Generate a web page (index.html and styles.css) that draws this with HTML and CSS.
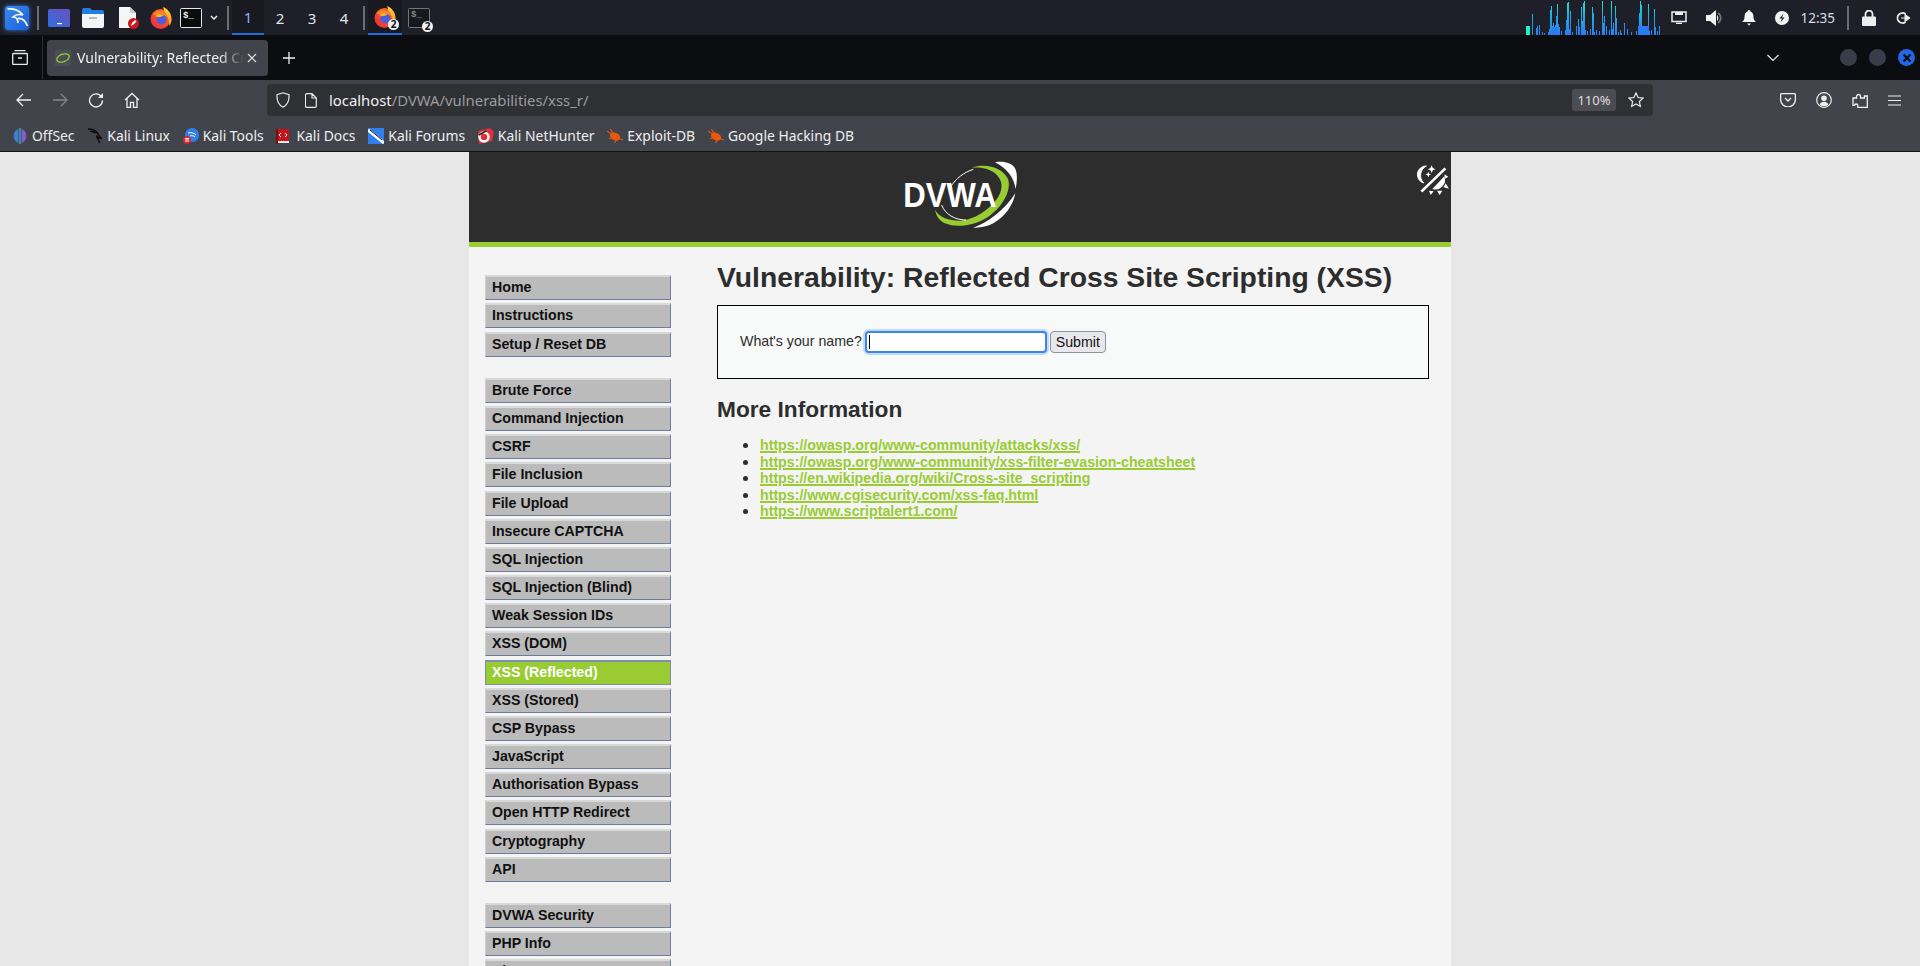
FILE: index.html
```html
<!DOCTYPE html>
<html>

<head>
    <title>Vulnerability: Reflected Cross Site Scripting (XSS)</title>
    <link rel="stylesheet" href="styles.css">
</head>

<body>
    <!-- shared icon shapes -->
    <svg class="icon-defs" width="0" height="0">
        <defs>
            <linearGradient id="foxBody" x1="0" y1="1" x2="1" y2="0">
                <stop offset="0" stop-color="#e8263c"/>
                <stop offset="1" stop-color="#ff7a1e"/>
            </linearGradient>
            <linearGradient id="foxFlame" x1="0" y1="0" x2="0" y2="1">
                <stop offset="0" stop-color="#ffd23c"/>
                <stop offset="1" stop-color="#ff9a1e"/>
            </linearGradient>
            <linearGradient id="desktopFill" x1="0" y1="1" x2="1" y2="0">
                <stop offset="0" stop-color="#2f6fe0"/>
                <stop offset="1" stop-color="#6a4fc0"/>
            </linearGradient>
            <g id="fox">
                <circle cx="10.500" cy="12" r="10" fill="url(#foxBody)"/>
                <path d="M13 0c5 2 8 6 8.500 11 .3 3-.5 6-2 8-.5-7-2-11-5-14 0-2-1-3-1.500-5z" fill="url(#foxFlame)"/>
                <path d="M3 8c2-4 6-5 10-3 2 1 3 3 3.500 5l-5-2z" fill="#ff8a1e"/>
                <circle cx="11.500" cy="12.500" r="5" fill="#4a5fe0"/>
                <path d="M5 9c3-2 6-2 9-1-2 1-3 2-4 2-2 0-3 0-5-1z" fill="#ffb02c"/>
            </g>
            <g id="bug">
                <ellipse cx="7.500" cy="7" rx="5" ry="3.500" transform="rotate(25 7.500 7)" fill="#e8590c"/>
                <path d="M0 2l5 3M3 0l3 4M15 10l-4-1M7 13l2-3M2 9l3-1" stroke="#e8590c"/>
            </g>
        </defs>
    </svg>

    <!-- desktop panel -->
    <div class="panel">
        <div class="panel-logo">
            <svg width="24" height="24" viewBox="0 0 24 24"><path d="M2.500 3C9 2 15 5 18 9M18 9C14 8 10 9 8 11 11 11 13 13 13 17M13 12.500C17 12 20 14 22.500 20" fill="none" stroke="#fff" stroke-width="1.700"/></svg>
        </div>
        <span class="panel-sep"></span>
        <div class="launcher launcher-desktop">
            <svg width="22" height="18" viewBox="0 0 22 18"><rect width="22" height="18" rx="1.500" fill="url(#desktopFill)"/><rect x="9" y="14" width="5" height="1.200" fill="#fff"/></svg>
        </div>
        <div class="launcher launcher-files">
            <svg width="22" height="20" viewBox="0 0 22 20"><path d="M0 2q0-2 2-2h6l2 2h10q2 0 2 2v3h-22z" fill="#1f7fe0"/><path d="M0 6h22v12q0 2-2 2h-18q-2 0-2-2z" fill="#f4f5f6"/><rect x="7" y="9" width="8" height="2" fill="#bbb"/></svg>
        </div>
        <div class="launcher launcher-doc">
            <svg width="22" height="22" viewBox="0 0 22 22"><path d="M1 0h11l6 6v15h-17z" fill="#f6f6f6"/><path d="M12 0l6 6h-6z" fill="#ccc"/><circle cx="15.500" cy="16.500" r="5.500" fill="#c9171e"/><path d="M13 19l1-3 3-3 1.500 1.500-3 3z" fill="#fff"/></svg>
        </div>
        <div class="launcher launcher-fox">
            <svg width="22" height="22" viewBox="0 0 22 22"><use href="#fox"/></svg>
        </div>
        <div class="launcher launcher-term">
            <svg width="22" height="20" viewBox="0 0 22 20"><rect x=".5" y=".5" width="21" height="19" rx="1" fill="#0b0b0d" stroke="#e8e8e8"/><text x="3" y="10" class="term-text">$_</text></svg>
        </div>
        <svg class="panel-chevron" width="8" height="6" viewBox="0 0 8 6"><path d="M1 1l3 3 3-3" fill="none" stroke="#eee" stroke-width="1.500"/></svg>
        <span class="panel-sep sep-workspaces"></span>
        <div class="workspace workspace-active">1</div>
        <div class="workspace">2</div>
        <div class="workspace">3</div>
        <div class="workspace">4</div>
        <span class="panel-sep sep-tasks"></span>
        <div class="task task-active">
            <svg width="22" height="22" viewBox="0 0 22 22"><use href="#fox"/></svg>
            <span class="task-count">2</span>
        </div>
        <div class="task">
            <svg width="22" height="20" viewBox="0 0 22 20"><rect x=".5" y=".5" width="21" height="19" rx="1" fill="#17181f" stroke="#777"/><text x="3" y="9" class="term-text term-dim">$_</text></svg>
            <span class="task-count">2</span>
        </div>

        <svg class="cpu-graph" width="134" height="34" viewBox="0 0 134 34">
            <defs>
                <linearGradient id="cpuFill" gradientUnits="userSpaceOnUse" x1="0" y1="34" x2="0" y2="0">
                    <stop offset="0" stop-color="#2a7df0"/>
                    <stop offset=".5" stop-color="#1ea8e8"/>
                    <stop offset="1" stop-color="#12e6d8"/>
                </linearGradient>
            </defs>
            <rect y="25" width="4" height="9" fill="#1ff0c8"/>
            <path d="M6.500 34V13M10.500 34V27M11.500 34V25M13.500 34V24M16.500 34V31M18.500 34V32M22.500 34V31M23.500 34V28M24.500 34V9M25.500 34V5M26.500 34V25M27.500 34V22M29.500 34V24M30.500 34V15M31.500 34V3M32.500 34V23M33.500 34V26M35.500 34V30M39.500 34V29M40.500 34V19M41.500 34V2M42.500 34V1M43.500 34V28M44.500 34V10M46.500 34V31M50.500 34V25M52.500 34V18M53.500 34V26M55.500 34V6M56.500 34V20M57.500 34V2M58.500 34V0M59.500 34V29M61.500 34V30M64.500 34V28M66.500 34V6M67.500 34V12M68.500 34V31M70.500 34V29M73.500 34V30M76.500 34V0M77.500 34V22M78.500 34V15M80.500 34V25M83.500 34V29M85.500 34V0M86.500 34V28M87.500 34V22M89.500 34V5M90.500 34V17M92.500 34V31M94.500 34V29M95.500 34V32M98.500 34V22M101.500 34V28M105.500 34V31M110.500 34V30M113.500 34V12M114.500 34V0M115.500 34V4M116.500 34V26M118.500 34V25M120.500 34V28M122.500 34V3M123.500 34V30M125.500 34V29M128.500 34V8M129.500 34V26M131.500 34V30M133.500 34V25" stroke="url(#cpuFill)" fill="none"/>
            <rect x="42" y="30" width="2" height="4" fill="#2a7df0"/>
            <rect x="112" y="25" width="11" height="9" fill="#2a7df0"/>
            <rect x="26" y="26" width="6" height="8" fill="#2a7df0"/>
        </svg>
        <div class="tray">
            <svg width="16" height="13" viewBox="0 0 16 13"><path d="M1 1h14v9.500h-14zM5 12.500h6" fill="none" stroke="#eee" stroke-width="1.500"/><path d="M4 1h8v3h-8z" fill="#eee"/></svg>
            <svg class="tray-volume" width="18" height="16" viewBox="0 0 18 16"><path d="M0 5h4l6-5v16l-6-5h-4z" fill="#f2f2f2"/><path d="M12 3a6 6 0 0 1 0 10" fill="none" stroke="#777" stroke-width="1.600"/><path d="M11 5a4 4 0 0 1 0 6z" fill="#eee"/></svg>
            <svg width="16" height="16" viewBox="0 0 16 16"><path d="M8 0a1.500 1.500 0 0 1 1.500 1.500c2.500 1 3 3 3 6 0 2 1 3 2.500 4.500h-14c1.500-1.500 2.500-2.500 2.500-4.500 0-3 .5-5 3-6a1.500 1.500 0 0 1 1.500-1.500zM6 13.500h4l-2 2z" fill="#f5f5f5"/></svg>
            <svg width="14" height="14" viewBox="0 0 14 14"><circle cx="7" cy="7" r="7" fill="#f2f2f2"/><path d="M8.500 2.500l-4 5h2.500l-1.500 4 4-5h-2.500z" fill="#1e1f29"/></svg>
            <span class="clock">12:35</span>
            <span class="panel-sep sep-tray"></span>
            <svg width="14" height="16" viewBox="0 0 14 16"><path d="M3.500 7v-3a3.500 3.500 0 0 1 7 0v3" fill="none" stroke="#eee" stroke-width="1.800"/><rect y="6.500" width="14" height="9.500" rx="1" fill="#eee"/></svg>
            <svg class="tray-exit" width="15" height="14" viewBox="0 0 15 14"><path d="M9.500 3a5 5 0 1 0 0 8" fill="none" stroke="#eee" stroke-width="1.800"/><path d="M5 7h6M9 3.500l5 3.500-5 3.500z" fill="#eee" stroke="#eee"/></svg>
        </div>
    </div>

    <!-- browser tabs -->
    <div class="tabbar">
        <div class="tabs-view">
            <svg width="16" height="15" viewBox="0 0 16 15"><path d="M2.500 .7h11M1.300 3.500h13.400a.6.6 0 0 1 .6.6v9.700a.6.6 0 0 1-.6.6h-13.400a.6.6 0 0 1-.6-.6v-9.700a.6.6 0 0 1 .6-.6zM6 8h4" fill="none" stroke="#e8e8ea" stroke-width="1.300"/></svg>
        </div>
        <div class="tab">
            <span class="tab-favicon">
                <svg width="16" height="16" viewBox="0 0 16 16"><ellipse cx="8" cy="8" rx="6.500" ry="3.800" transform="rotate(-20 8 8)" fill="none" stroke="#9c3" stroke-width="1.300"/></svg>
            </span>
            <span class="tab-title">Vulnerability: Reflected Cross Site Scripting (XSS)</span>
            <svg width="10" height="10" viewBox="0 0 10 10"><path d="M1 1l8 8M9 1l-8 8" stroke="#e2e2e4" stroke-width="1.100"/></svg>
        </div>
        <svg class="tab-new" width="14" height="14" viewBox="0 0 14 14"><path d="M7 1v12M1 7h12" stroke="#f0f0f2" stroke-width="1.300"/></svg>
        <svg class="tab-list" width="14" height="8" viewBox="0 0 14 8"><path d="M1.500 1l5.500 5.500 5.500-5.500" fill="none" stroke="#e8e8ea" stroke-width="1.200"/></svg>
        <div class="window-buttons">
            <span class="window-button"></span>
            <span class="window-button"></span>
            <span class="window-button window-close">
                <svg width="10" height="10" viewBox="0 0 10 10"><path d="M1.500 1.500l7 7M8.500 1.500l-7 7" stroke="#0c0d10" stroke-width="2.200"/></svg>
            </span>
        </div>
    </div>

    <!-- navigation -->
    <div class="navbar">
        <div class="nav-buttons">
            <svg width="16" height="14" viewBox="0 0 16 14"><path d="M15 7h-13M7 1l-6 6 6 6" fill="none" stroke="#f0f0f2" stroke-width="1.300"/></svg>
            <svg width="16" height="14" viewBox="0 0 16 14"><path d="M1 7h13M9 1l6 6-6 6" fill="none" stroke="#85868b" stroke-width="1.300"/></svg>
            <svg width="16" height="16" viewBox="0 0 16 16"><path d="M13.500 5a6.500 6.500 0 1 0 1 3.500" fill="none" stroke="#f0f0f2" stroke-width="1.300"/><path d="M15 1v5h-5z" fill="#f0f0f2"/></svg>
            <svg width="16" height="16" viewBox="0 0 16 16"><path d="M1 8l7-6.500 7 6.500M3 6.500v8.800h3.500v-5h3v5h3.500v-8.800" fill="none" stroke="#f0f0f2" stroke-width="1.300"/></svg>
        </div>
        <div class="urlbar">
            <svg width="14" height="16" viewBox="0 0 14 16"><path d="M7 .8l6 2c.3 5.500-1 10-6 12.400-5-2.400-6.300-6.900-6-12.400z" fill="none" stroke="#ececee" stroke-width="1.200"/></svg>
            <svg width="12" height="15" viewBox="0 0 12 15"><path d="M1.700 .7h5.300l4.300 4.300v8a1.300 1.300 0 0 1-1.300 1.300h-8.300a1.300 1.300 0 0 1-1.300-1.300v-11a1.300 1.300 0 0 1 1.300-1.300zM7 .7v4.300h4.300" fill="none" stroke="#ececee" stroke-width="1.200"/></svg>
            <span class="url-text">localhost<span class="url-path">/DVWA/vulnerabilities/xss_r/</span></span>
            <span class="url-zoom">110%</span>
            <svg width="16" height="16" viewBox="0 0 16 16"><path d="M8 1l2.100 4.500 4.900.6-3.600 3.400.9 4.900-4.300-2.400-4.300 2.400.9-4.900-3.600-3.400 4.900-.6z" fill="none" stroke="#ececee" stroke-width="1.200"/></svg>
        </div>
        <div class="nav-actions">
            <svg width="16" height="14" viewBox="0 0 16 14"><path d="M1.500 .7h13a.9.900 0 0 1 .9.900v4.900a7.400 7.400 0 0 1-14.800 0v-4.900a.9.900 0 0 1 .9-.900zM5 5l3 3 3-3" fill="none" stroke="#f0f0f2" stroke-width="1.300"/></svg>
            <svg width="16" height="16" viewBox="0 0 16 16"><circle cx="8" cy="8" r="7.300" fill="none" stroke="#f0f0f2" stroke-width="1.200"/><circle cx="8" cy="6.300" r="2.800" fill="#f0f0f2"/><path d="M3.500 12.500c1-2 2.500-2.800 4.500-2.800s3.500.8 4.500 2.800c-2.500 2-6.500 2-9 0z" fill="#f0f0f2"/></svg>
            <svg width="16" height="16" viewBox="0 0 16 16"><path d="M1 6h3.500v-1.500a2 2 0 0 1 4 0v1.500h4v-2h2.800v11.300h-9.500v-2.300a1.800 1.800 0 0 0-3.200 0v.3h-1.600z" fill="none" stroke="#f0f0f2" stroke-width="1.300"/></svg>
            <svg width="13" height="11" viewBox="0 0 13 11"><path d="M0 1h13M0 5.500h13M0 10h13" stroke="#f0f0f2" stroke-width="1.200"/></svg>
        </div>
    </div>

    <!-- bookmarks -->
    <div class="bookmarks">
        <a class="bookmark">
            <svg width="16" height="16" viewBox="0 0 15 15"><path d="M6 1a7 7 0 0 0 0 13z" fill="#3f7fd8"/><path d="M9 1a7 7 0 0 1 0 13z" fill="#8a5ad0"/><rect x="7" y="0" width="1" height="15" fill="#27d0e0"/></svg>
            OffSec
        </a>
        <a class="bookmark">
            <svg width="16" height="16" viewBox="0 0 15 15"><path d="M1 1c4 0 7 1 9 4 1 2 2 4 4 5-2 0-4-1-5-3 0 3 2 4 3 7M3 3c2 0 4 1 5 2" fill="none" stroke="#0b0b0d" stroke-width="1.300"/></svg>
            Kali Linux
        </a>
        <a class="bookmark">
            <svg width="16" height="16" viewBox="0 0 16 16"><circle cx="9" cy="7" r="7" fill="#2f80e8"/><path d="M5 5c3-1 6 0 8 2M7 8c2-1 4 0 5 1" fill="none" stroke="#fff"/><circle cx="4" cy="12" r="4" fill="#d8262c"/><rect x="2" y="10" width="4" height="1" fill="#fff"/><rect x="2.500" y="10" width="1" height="4" fill="#fff"/><rect x="4.500" y="10" width="1" height="4" fill="#fff"/></svg>
            Kali Tools
        </a>
        <a class="bookmark">
            <svg width="16" height="16" viewBox="0 0 16 16"><path d="M1 1h12v12h-12z" fill="#c4161c"/><path d="M1 13h12v2h-12z" fill="#e8e8e8"/><path d="M0 1h2v15h-2z" fill="#7c0e12"/><path d="M5 5l-2 2 2 2M9 5l2 2-2 2" fill="none" stroke="#fff"/></svg>
            Kali Docs
        </a>
        <a class="bookmark">
            <svg width="16" height="16" viewBox="0 0 16 16"><rect width="16" height="16" fill="#2f80e8"/><path d="M0 2l16 13" stroke="#fff" stroke-width="3"/><path d="M2 2l12 10" stroke="#222"/></svg>
            Kali Forums
        </a>
        <a class="bookmark">
            <svg width="16" height="16" viewBox="0 0 16 16"><path d="M0 3l12-3 4 4-2 9-13 3z" fill="#e0303a"/><circle cx="6" cy="9" r="4.500" fill="none" stroke="#fff" stroke-width="2.500"/><path d="M1 7l7-4" stroke="#222" stroke-width="1.500"/></svg>
            Kali NetHunter
        </a>
        <a class="bookmark">
            <svg width="16" height="14" viewBox="0 0 15 13"><use href="#bug"/></svg>
            Exploit-DB
        </a>
        <a class="bookmark">
            <svg width="16" height="14" viewBox="0 0 15 13"><use href="#bug"/></svg>
            Google Hacking DB
        </a>
    </div>

    <!-- page -->
    <div class="viewport">
        <div class="page">
            <div class="page-header">
                <svg class="dvwa-logo" width="140" height="85" viewBox="0 0 420 255">
                    <path d="M245 38C290 22 340 40 354 72 364 100 345 150 295 185 255 212 200 220 165 205 148 197 138 182 135 165 150 188 175 197 210 197 250 195 300 165 325 125 340 100 338 75 315 55 298 40 270 36 245 38z" fill="#9c3"/>
                    <path d="M315 22C340 18 365 22 376 42 384 60 380 85 377 102 372 70 352 40 315 22zM376 115C370 150 345 185 310 205 292 215 270 219 250 218 290 205 345 165 376 115z" fill="#fff"/>
                    <path d="M250 43C222 52 198 70 182 95M155 150C165 178 195 195 228 195" fill="none" stroke="#fff" stroke-width="3"/>
                    <text x="40" y="155" textLength="280" lengthAdjust="spacingAndGlyphs" class="dvwa-text">DVWA</text>
                </svg>
                <svg class="theme-toggle" width="46" height="50" viewBox="0 0 138 150">
                    <path d="M64 33A26 26 0 0 0 56 84 32 32 0 0 1 64 33z" fill="#fff" stroke="#fff" stroke-width="3"/>
                    <path d="M80 31l3.500 8 8 3.500-8 3.500-3.500 8-3.500-8-8-3.500 8-3.500zM70 50l2.500 6 6 2.500-6 2.500-2.500 6-2.500-6-6-2.500 6-2.500z" fill="#fff"/>
                    <path d="M121 40L49 110" stroke="#fff" stroke-width="8"/>
                    <path d="M118 64A29 29 0 0 1 82 102z" fill="#fff"/>
                    <path d="M118 58l12 7-10 6zM122 85l10 16-16-4zM96 107h16l-8 13zM72 107l14 2-9 11z" fill="#fff"/>
                </svg>
            </div>
            <div class="page-body">
                <div class="main-menu">
                    <ul class="menu-group">
                        <li><a>Home</a></li>
                        <li><a>Instructions</a></li>
                        <li><a>Setup / Reset DB</a></li>
                    </ul>
                    <ul class="menu-group">
                        <li><a>Brute Force</a></li>
                        <li><a>Command Injection</a></li>
                        <li><a>CSRF</a></li>
                        <li><a>File Inclusion</a></li>
                        <li><a>File Upload</a></li>
                        <li><a>Insecure CAPTCHA</a></li>
                        <li><a>SQL Injection</a></li>
                        <li><a>SQL Injection (Blind)</a></li>
                        <li><a>Weak Session IDs</a></li>
                        <li><a>XSS (DOM)</a></li>
                        <li class="selected"><a>XSS (Reflected)</a></li>
                        <li><a>XSS (Stored)</a></li>
                        <li><a>CSP Bypass</a></li>
                        <li><a>JavaScript</a></li>
                        <li><a>Authorisation Bypass</a></li>
                        <li><a>Open HTTP Redirect</a></li>
                        <li><a>Cryptography</a></li>
                        <li><a>API</a></li>
                    </ul>
                    <ul class="menu-group">
                        <li><a>DVWA Security</a></li>
                        <li><a>PHP Info</a></li>
                        <li><a>About</a></li>
                    </ul>
                </div>
                <div class="main-body">
                    <h1>Vulnerability: Reflected Cross Site Scripting (XSS)</h1>
                    <div class="vulnerable-code">
                        <form class="name-form" onsubmit="return false;">
                            <label for="nameInput" class="name-label">What's your name?</label>
                            <input type="text" id="nameInput" class="name-input">
                            <button type="submit" class="submit-button">Submit</button>
                        </form>
                    </div>
                    <h2>More Information</h2>
                    <ul class="info-links">
                        <li><a href="#">https://owasp.org/www-community/attacks/xss/</a></li>
                        <li><a href="#">https://owasp.org/www-community/xss-filter-evasion-cheatsheet</a></li>
                        <li><a href="#">https://en.wikipedia.org/wiki/Cross-site_scripting</a></li>
                        <li><a href="#">https://www.cgisecurity.com/xss-faq.html</a></li>
                        <li><a href="#">https://www.scriptalert1.com/</a></li>
                    </ul>
                </div>
            </div>
        </div>
    </div>
</body>

</html>
```

FILE: styles.css
```css
html,
body {
    height: 100%;
    margin: 0;
}

body {
    display: flex;
    flex-direction: column;
    overflow: hidden;
    background-color: #e7e7e7;
    font-family: 'Noto Sans', sans-serif;
}

svg {
    display: block;
    flex-shrink: 0;
}

.icon-defs {
    position: absolute;
}

/* desktop panel */
.panel {
    display: flex;
    align-items: center;
    height: 35px;
    padding-left: 5px;
    background-color: #1e1f29;
    color: #eee;
}

.panel-logo {
    display: flex;
    align-items: center;
    justify-content: center;
    width: 24px;
    height: 24px;
    border-radius: 3px;
    background: linear-gradient(135deg, #3b8bf0, #1a5fd8);
    box-shadow: 0 0 4px #2f7fe8;
}

.panel-sep {
    width: 2px;
    height: 24px;
    margin-left: 8px;
    background-color: #6c6d74;
}

.launcher {
    display: flex;
    justify-content: center;
    width: 22px;
}

.launcher-desktop {
    margin-left: 9px;
}

.launcher-files {
    margin-left: 12px;
}

.launcher-doc {
    margin-left: 14px;
}

.launcher-fox {
    margin-left: 10px;
}

.launcher-term {
    margin-left: 8px;
}

.panel-chevron {
    margin-left: 8px;
}

.sep-workspaces {
    margin-left: 9px;
    margin-right: 3px;
}

.workspace {
    display: flex;
    align-items: center;
    justify-content: center;
    width: 32px;
    height: 35px;
    box-sizing: border-box;
    font-size: 15px;
    color: #dfe6f0;
}

.workspace-active {
    border-bottom: 2px solid #1d6ce0;
    background-color: #181921;
    color: #7fb4ff;
}

.sep-tasks {
    margin-left: 3px;
    margin-right: 3px;
}

.task {
    display: flex;
    align-items: center;
    justify-content: center;
    position: relative;
    width: 34px;
    height: 35px;
    box-sizing: border-box;
}

.task-active {
    border-bottom: 2px solid #1d6ce0;
    background-color: #181921;
}

.task-count {
    position: absolute;
    right: 3px;
    bottom: 3px;
    width: 11px;
    height: 11px;
    border-radius: 50%;
    background-color: #f2f2f2;
    color: #111;
    font-size: 10px;
    font-weight: 700;
    line-height: 11px;
    text-align: center;
}

.term-text {
    font-family: 'Liberation Mono', monospace;
    font-size: 9px;
    font-weight: 700;
    fill: #eee;
}

.term-dim {
    fill: #888;
}

.cpu-graph {
    margin-left: auto;
}

.tray {
    display: flex;
    align-items: center;
    margin-left: 11px;
    margin-right: 9px;
    gap: 18px;
}

.tray-volume {
    margin-left: 1px;
    margin-right: -1px;
}

.clock {
    margin-left: -7px;
    font-size: 13.500px;
    color: #d8dde6;
}

.sep-tray {
    margin-left: -6px;
    margin-right: -5px;
}

.tray-exit {
    margin-left: 2px;
}

/* tab strip */
.tabbar {
    display: flex;
    align-items: center;
    height: 45px;
    background-color: #0c0d10;
}

.tabs-view {
    display: flex;
    align-items: center;
    justify-content: center;
    width: 40px;
    height: 43px;
    padding-right: 2px;
    border-right: 1px solid #2c2d33;
}

.tab {
    display: flex;
    align-items: center;
    width: 221px;
    height: 36px;
    margin-left: 4px;
    padding: 0 11px 0 8px;
    box-sizing: border-box;
    border-radius: 4px;
    background-color: #42444c;
    color: #f2f2f4;
    font-size: 14px;
}

.tab-favicon {
    display: block;
    background-color: #4c4e56;
    margin-right: 6px;
}

.tab-title {
    flex: 1;
    overflow: hidden;
    white-space: nowrap;
    margin-right: 3px;
    -webkit-mask-image: linear-gradient(to right, #000 85%, transparent);
    mask-image: linear-gradient(to right, #000 85%, transparent);
}

.tab-new {
    margin-left: 14px;
}

.tab-list {
    margin-left: auto;
}

.window-buttons {
    display: flex;
    align-items: center;
    gap: 12px;
    margin-left: 60px;
    margin-right: 5px;
}

.window-button {
    display: flex;
    align-items: center;
    justify-content: center;
    width: 17px;
    height: 17px;
    border-radius: 50%;
    background-color: #393d4a;
}

.window-close {
    background-color: #2168e8;
}

/* nav toolbar */
.navbar {
    display: flex;
    align-items: center;
    height: 36px;
    background-color: #42444c;
    padding-top: 4px;
    box-sizing: border-box;
}

.nav-buttons {
    display: flex;
    align-items: center;
    gap: 20px;
    margin-left: 16px;
    width: 251px;
}

.urlbar {
    display: flex;
    align-items: center;
    width: 1386px;
    height: 32px;
    padding: 0 9px;
    box-sizing: border-box;
    border-radius: 4px;
    background-color: #2f3034;
}

.urlbar svg+svg {
    margin-left: 15px;
}

.url-text {
    flex: 1;
    margin-left: 12px;
    color: #f0f0f2;
    font-size: 14.850px;
}

.url-path {
    color: #9a9b9f;
}

.url-zoom {
    width: 44px;
    height: 22px;
    margin-right: 12px;
    border-radius: 3px;
    background-color: #4c4d52;
    color: #dedee0;
    font-size: 13px;
    line-height: 22px;
    text-align: center;
}

.nav-actions {
    display: flex;
    align-items: center;
    gap: 20px;
    margin-left: 127px;
}

/* bookmarks toolbar */
.bookmarks {
    display: flex;
    align-items: center;
    height: 31px;
    padding: 4px 0 0 12px;
    gap: 12.800px;
    background-color: #42444c;
    border-bottom: 1px solid #111216;
}

.bookmark {
    display: flex;
    align-items: center;
    gap: 4px;
    color: #eeeef0;
    font-size: 13.900px;
}

/* DVWA page */
.viewport {
    flex: 1;
    overflow: hidden;
}

.page {
    width: 982px;
    height: 100%;
    margin: 0 auto;
    background-color: #f4f4f4;
}

.page-header {
    display: grid;
    grid-template-columns: 1fr auto 1fr;
    height: 90px;
    border-bottom: 5px solid #9c3;
    background-color: #2d2d2d;
}

.dvwa-logo {
    grid-column: 2;
    margin-top: 3px;
}

.dvwa-text {
    font-family: 'Liberation Sans', sans-serif;
    font-size: 106px;
    font-weight: 700;
    fill: #fff;
}

.theme-toggle {
    grid-column: 3;
    justify-self: end;
    margin-top: 3px;
}

.page-body {
    display: flex;
    font-family: 'Liberation Sans', sans-serif;
    font-size: 14.200px;
    color: #2d2d2d;
}

.main-menu {
    width: 186px;
    margin-left: 16px;
    padding-top: 28.200px;
}

.menu-group {
    list-style: none;
    margin: 0 0 21.500px;
    padding: 0;
}

.menu-group li {
    height: 25px;
    margin-bottom: 3.160px;
}

.menu-group a {
    display: block;
    height: 25px;
    box-sizing: border-box;
    padding-left: 6px;
    border-style: solid;
    border-width: 2px 1px 1px;
    border-color: #d8d8d8 #6d7d9b #6d7d9b #cfcfcf;
    background-color: #bbb;
    color: #111;
    font-weight: 700;
    line-height: 21px;
}

.menu-group .selected a {
    border-color: #7d8fb0;
    background-color: #9c3;
    color: #fff;
}

.main-body {
    width: 712px;
    margin-left: 46px;
}

h1 {
    margin: 12px 0 0;
    font-size: 28.300px;
    line-height: 36px;
}

.vulnerable-code {
    height: 74px;
    margin-top: 10px;
    box-sizing: border-box;
    border: 1px solid #000;
    background-color: #f8f9f9;
}

.name-form {
    display: flex;
    align-items: center;
    height: 72px;
    padding-left: 22px;
}

.name-label {
    padding-bottom: 2px;
}

.name-input {
    width: 182px;
    height: 22px;
    margin-left: 3px;
    box-sizing: border-box;
    border: 2px solid #3d85e6;
    border-radius: 4px;
    box-shadow: 0 0 0 2px #bfdcf8;
    outline: none;
    /* the caret of the focused field */
    background: linear-gradient(#000, #000) no-repeat 2px center / 1px 14px #fff;
}

.submit-button {
    width: 56px;
    height: 22px;
    margin-left: 3px;
    padding: 0;
    border: 1px solid #8f8f9d;
    border-radius: 4px;
    background-color: #e9e9ed;
    color: #111;
    font-family: 'Liberation Sans', sans-serif;
    font-size: 14.200px;
}

h2 {
    margin: 17px 0 0;
    font-size: 22.700px;
    line-height: 26px;
}

.info-links {
    margin: 14px 0 0;
    padding-left: 43px;
    line-height: 16.500px;
}

.info-links li {
    height: 16.500px;
}

.info-links li::marker {
    font-size: 18px;
}

.info-links a {
    color: #9c3;
    font-weight: 700;
    text-decoration-thickness: 1.500px;
}
```
